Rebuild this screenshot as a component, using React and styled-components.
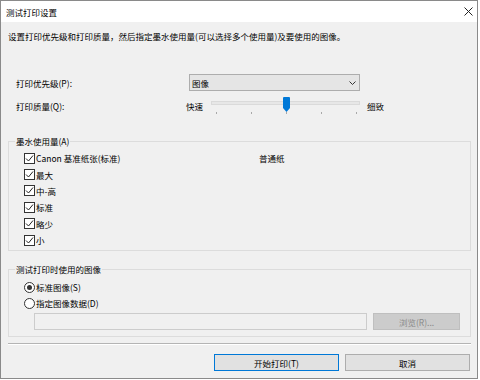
import React from "react";
import styled, { createGlobalStyle } from "styled-components";

const Global = createGlobalStyle`
  html, body { margin: 0; padding: 0; background: #ffffff; }
  body {
    font-family: "Noto Sans CJK SC", "Noto Sans", sans-serif;
    font-size: 8.5px;
    color: #000;
  }
  * { box-sizing: border-box; }
`;

const Window = styled.div`
  width: 478px;
  height: 379px;
  border: 1px solid #8a8a8a;
  background: #f0f0f0;
  display: flex;
  flex-direction: column;
`;

const TitleBar = styled.div`
  height: 21px;
  flex: none;
  background: #ffffff;
  display: flex;
  align-items: center;
  justify-content: space-between;
  padding: 0 4px 0 5px;
  line-height: 12px;
`;

const Body = styled.div`
  flex: 1;
  display: flex;
  flex-direction: column;
  padding: 0 6px 0 7px;
`;

const Text = styled.div`
  line-height: 12px;
  white-space: nowrap;
`;

const Description = styled(Text)`
  margin-top: 8px;
`;

const FormRow = styled.div`
  display: flex;
  align-items: center;
  padding-left: 8px;
  height: ${(p) => p.$h}px;
  margin-top: ${(p) => p.$mt}px;
`;

const FieldLabel = styled(Text)`
  width: ${(p) => p.$w}px;
  flex: none;
`;

const Select = styled.div`
  width: 171px;
  height: 17px;
  background: #e5e5e5;
  border: 1px solid #adadad;
  display: flex;
  align-items: center;
  justify-content: space-between;
  padding: 0 3px 0 2px;
  line-height: 12px;
`;

const SliderLabel = styled(Text)`
  width: 17px;
  margin-right: ${(p) => p.$mr || 0}px;
  margin-left: ${(p) => p.$ml || 0}px;
`;

const Slider = styled.div`
  position: relative;
  width: 149px;
  height: 21px;
  flex: none;
`;

const Track = styled.div`
  position: absolute;
  left: 0;
  right: 0;
  top: 6px;
  height: 4px;
  background: #e7e7e7;
  border: 1px solid #dadada;
`;

const Ticks = styled.div`
  position: absolute;
  left: 0;
  right: 0;
  top: 17px;
  display: flex;
  justify-content: space-between;
  padding: 0 3px 0 5px;
`;

const Tick = styled.span`
  width: 1px;
  height: 2px;
  background: #a8a8a8;
`;

const Thumb = styled.svg`
  position: absolute;
  top: 2px;
  left: ${(p) => p.$left}px;
`;

const Group = styled.fieldset`
  margin: ${(p) => p.$mt}px 0 0 0;
  min-width: 0;
  border: 1px solid #dcdcdc;
  padding: ${(p) => p.$pt}px 0 ${(p) => p.$pb}px 6px;
`;

const Legend = styled.legend`
  padding: 0 1px;
  line-height: 12px;
`;

const GroupContent = styled.div`
  display: flex;
  flex-direction: column;
  margin-left: 9px;
`;

const InkLayout = styled.div`
  display: flex;
`;

const OptionList = styled.div`
  width: 235px;
  display: flex;
  flex-direction: column;
`;

const Option = styled.div`
  display: flex;
  align-items: center;
  height: ${(p) => p.$h}px;
  gap: 1px;
  line-height: 12px;
  white-space: nowrap;
`;

const Box = styled.span`
  width: 11px;
  height: 11px;
  flex: none;
  border: 1px solid #333333;
  background: #ffffff;
  display: flex;
  align-items: center;
  justify-content: center;
`;

const Radio = styled.span`
  width: 11px;
  height: 11px;
  flex: none;
  border: 1px solid #333333;
  border-radius: 50%;
  background: #ffffff;
  display: flex;
  align-items: center;
  justify-content: center;
  &::after {
    content: "";
    width: 5px;
    height: 5px;
    border-radius: 50%;
    background: ${(p) => (p.$checked ? "#333333" : "transparent")};
  }
`;

const PaperText = styled.div`
  line-height: 16.4px;
`;

const FileRow = styled.div`
  display: flex;
  align-items: center;
  gap: 6px;
  margin-top: 2px;
  margin-left: 10px;
`;

const FileInput = styled.div`
  width: 333px;
  height: 17px;
  border: 1px solid #cccccc;
  background: #f0f0f0;
`;

const Button = styled.div`
  width: ${(p) => p.$w}px;
  height: 17px;
  display: flex;
  align-items: center;
  justify-content: center;
  line-height: 12px;
  background: ${(p) => (p.$disabled ? "#cccccc" : "#e1e1e1")};
  color: ${(p) => (p.$disabled ? "#8a8a8a" : "#000")};
  border: 1px solid
    ${(p) => (p.$primary ? "#0078d7" : p.$disabled ? "#bfbfbf" : "#adadad")};
`;

const Rule = styled.div`
  margin-top: 6px;
  height: 2px;
  border-top: 1px solid #b4b4b4;
  border-bottom: 1px solid #ffffff;
`;

const ButtonRow = styled.div`
  display: flex;
  justify-content: flex-end;
  gap: 6px;
  margin-top: 9px;
  padding-right: 1px;
`;

const CloseIcon = () => (
  <svg width="9" height="9" viewBox="0 0 9 9">
    <path d="M0.5 0.5 L8.5 8.5 M8.5 0.5 L0.5 8.5" stroke="#222" strokeWidth="1" fill="none" />
  </svg>
);

const Chevron = () => (
  <svg width="7" height="4" viewBox="0 0 7 4">
    <path d="M0.5 0.5 L3.5 3.5 L6.5 0.5" stroke="#333" strokeWidth="1" fill="none" />
  </svg>
);

const Check = () => (
  <svg width="9" height="9" viewBox="0 0 9 9">
    <path d="M1 4.5 L3.5 7 L8 1.5" stroke="#222" strokeWidth="1" fill="none" />
  </svg>
);

const inkOptions = ["Canon 基准纸张(标准)", "最大", "中-高", "标准", "略少", "小"];

export default function App() {
  return (
    <>
      <Global />
      <Window>
        <TitleBar>
          <span>测试打印设置</span>
          <CloseIcon />
        </TitleBar>
        <Body>
          <Description>
            设置打印优先级和打印质量，然后指定墨水使用量(可以选择多个使用量)及要使用的图像。
          </Description>

          <FormRow $h={17} $mt={32}>
            <FieldLabel $w={173}>打印优先级(P):</FieldLabel>
            <Select>
              <span>图像</span>
              <Chevron />
            </Select>
          </FormRow>

          <FormRow $h={21} $mt={4}>
            <FieldLabel $w={170}>打印质量(Q):</FieldLabel>
            <SliderLabel $mr={8}>快速</SliderLabel>
            <Slider>
              <Track />
              <Ticks>
                {[0, 1, 2, 3, 4].map((i) => (
                  <Tick key={i} />
                ))}
              </Ticks>
              <Thumb $left={72} width="7" height="15" viewBox="0 0 7 15">
                <path d="M0 1 Q0 0 1 0 L6 0 Q7 0 7 1 L7 11 L3.5 15 L0 11 Z" fill="#0078d7" />
              </Thumb>
            </Slider>
            <SliderLabel $ml={7}>细致</SliderLabel>
          </FormRow>

          <Group $mt={19} $pt={3} $pb={2}>
            <Legend>墨水使用量(A)</Legend>
            <GroupContent>
              <InkLayout>
                <OptionList>
                  {inkOptions.map((o) => (
                    <Option key={o} $h={16.4}>
                      <Box>
                        <Check />
                      </Box>
                      <span>{o}</span>
                    </Option>
                  ))}
                </OptionList>
                <PaperText>普通纸</PaperText>
              </InkLayout>
            </GroupContent>
          </Group>

          <Group $mt={12} $pt={4} $pb={6}>
            <Legend>测试打印时使用的图像</Legend>
            <GroupContent>
              <Option $h={16}>
                <Radio $checked />
                <span>标准图像(S)</span>
              </Option>
              <Option $h={16}>
                <Radio />
                <span>指定图像数据(D)</span>
              </Option>
              <FileRow>
                <FileInput />
                <Button $w={87} $disabled>
                  浏览(R)...
                </Button>
              </FileRow>
            </GroupContent>
          </Group>

          <Rule />

          <ButtonRow>
            <Button $w={125} $primary>
              开始打印(T)
            </Button>
            <Button $w={125}>取消</Button>
          </ButtonRow>
        </Body>
      </Window>
    </>
  );
}
